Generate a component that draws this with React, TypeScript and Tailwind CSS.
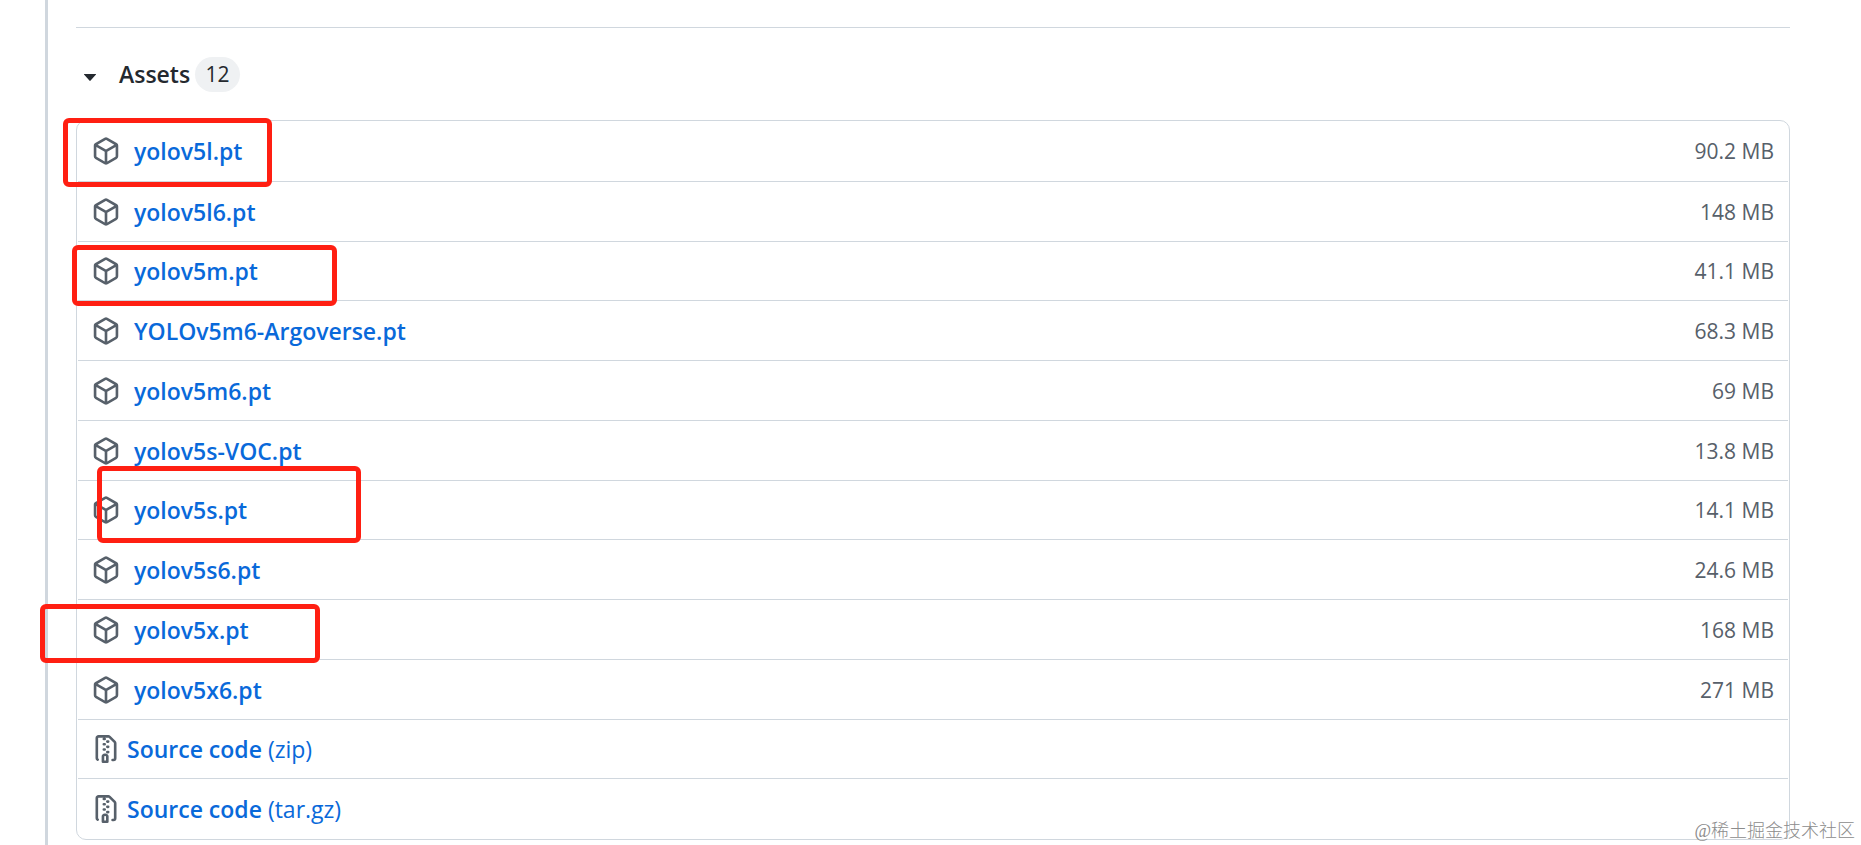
type Asset = {
  name: string;
  size?: string;
  format?: string;
  // box drawn around the files worth downloading
  mark?: string;
};

const assets: Asset[] = [
  { name: "yolov5l.pt", size: "90.2 MB", mark: "-left-[15px] -top-[3px] h-[69px] w-[209px]" },
  { name: "yolov5l6.pt", size: "148 MB" },
  { name: "yolov5m.pt", size: "41.1 MB", mark: "-left-[6px] top-[3px] h-[61px] w-[265px]" },
  { name: "YOLOv5m6-Argoverse.pt", size: "68.3 MB" },
  { name: "yolov5m6.pt", size: "69 MB" },
  { name: "yolov5s-VOC.pt", size: "13.8 MB" },
  { name: "yolov5s.pt", size: "14.1 MB", mark: "left-[19px] -top-[15px] h-[77px] w-[264px]" },
  { name: "yolov5s6.pt", size: "24.6 MB" },
  { name: "yolov5x.pt", size: "168 MB", mark: "-left-[38px] top-[4px] h-[59px] w-[280px]" },
  { name: "yolov5x6.pt", size: "271 MB" },
  { name: "Source code", format: "(zip)" },
  { name: "Source code", format: "(tar.gz)" },
];

function PackageIcon() {
  return (
    <svg viewBox="0 0 16 16" className="size-7 shrink-0 fill-[#57606a]" aria-hidden="true">
      <path d="m8.878.392 5.25 3.045c.54.314.872.89.872 1.514v6.098a1.75 1.75 0 0 1-.872 1.514l-5.25 3.045a1.75 1.75 0 0 1-1.756 0l-5.25-3.045A1.75 1.75 0 0 1 1 11.049V4.951c0-.624.332-1.201.872-1.514L7.122.392a1.75 1.75 0 0 1 1.756 0ZM7.875 1.69l-4.63 2.685L8 7.133l4.755-2.758-4.63-2.685a.248.248 0 0 0-.25 0ZM2.5 5.677v5.372c0 .09.047.171.125.216l4.625 2.683V8.432Zm6.25 8.271 4.625-2.683a.25.25 0 0 0 .125-.216V5.677L8.75 8.432Z" />
    </svg>
  );
}

function FileZipIcon() {
  return (
    <svg viewBox="0 0 16 16" className="size-7 shrink-0 fill-[#57606a]" aria-hidden="true">
      <path d="M3.5 1.75v11.5c0 .09.048.173.126.217a.75.75 0 0 1-.752 1.298A1.748 1.748 0 0 1 2 13.25V1.75C2 .784 2.784 0 3.75 0h5.586c.464 0 .909.185 1.237.513l2.914 2.914c.329.328.513.773.513 1.237v8.586A1.75 1.75 0 0 1 12.25 15h-.5a.75.75 0 0 1 0-1.5h.5a.25.25 0 0 0 .25-.25V4.664a.25.25 0 0 0-.073-.177L9.513 1.573a.25.25 0 0 0-.177-.073H7.25a.75.75 0 0 1 0 1.5h-.5a.75.75 0 0 1 0-1.5h-3a.25.25 0 0 0-.25.25Zm3.75 8.75h.5c.966 0 1.75.784 1.75 1.75v3a.75.75 0 0 1-.75.75h-2.5a.75.75 0 0 1-.75-.75v-3c0-.966.784-1.75 1.75-1.75ZM6 5.25a.75.75 0 0 1 .75-.75h.5a.75.75 0 0 1 0 1.5h-.5A.75.75 0 0 1 6 5.25Zm.75 2.25h.5a.75.75 0 0 1 0 1.5h-.5a.75.75 0 0 1 0-1.5ZM8 6.75A.75.75 0 0 1 8.75 6h.5a.75.75 0 0 1 0 1.5h-.5A.75.75 0 0 1 8 6.75ZM8.75 3h.5a.75.75 0 0 1 0 1.5h-.5a.75.75 0 0 1 0-1.5ZM8 9.75A.75.75 0 0 1 8.75 9h.5a.75.75 0 0 1 0 1.5h-.5A.75.75 0 0 1 8 9.75Zm-1 2.5v2.25h1v-2.25a.25.25 0 0 0-.25-.25h-.5a.25.25 0 0 0-.25.25Z" />
    </svg>
  );
}

function AssetRow({ asset }: { asset: Asset }) {
  return (
    <li className="relative flex h-[60px] items-center justify-between border-b border-[#d0d7de] px-3.5 first:h-[61px] last:border-b-0 nth-[4n+3]:h-[59px]">
      <div className={asset.format ? "flex items-center gap-[7px]" : "flex items-center gap-3.5"}>
        {asset.format ? <FileZipIcon /> : <PackageIcon />}
        <a href="#download" className="text-[#0969da]">
          <span className="font-semibold">{asset.name}</span>
          {asset.format && <span> {asset.format}</span>}
        </a>
      </div>
      {asset.size && <span className="text-[21px] text-[#57606a]">{asset.size}</span>}
      {asset.mark && (
        <span
          className={`pointer-events-none absolute z-10 rounded-md border-5 border-[#ff1f12] ${asset.mark}`}
        />
      )}
    </li>
  );
}

export default function App() {
  return (
    <div className="relative min-h-screen bg-white pl-[45px] font-['Open_Sans','Noto_Sans',sans-serif] text-[23px] leading-8 text-[#24292f]">
      <main className="min-h-screen border-l-3 border-[#d0d7de] pl-7 pr-[71px] pt-[27px]">
        <hr className="border-[#d0d7de]" />

        <details open>
          <summary className="flex h-23 list-none items-center pl-2">
            <svg viewBox="0 0 12 13" className="h-[13px] w-3 fill-[#24292f]" aria-hidden="true">
              <path d="M0 6h12v.5L6.6 12.6a.8.8 0 0 1-1.2 0L0 6.5Z" />
            </svg>
            <span className="ml-[23px] w-17 font-semibold">Assets</span>
            <span className="ml-2 flex h-[35px] w-[45px] items-center justify-center rounded-full bg-[#eff1f3] text-[21px] font-medium">
              12
            </span>
          </summary>

          <ul className="rounded-[10px] border border-[#d0d7de] px-px">
            {assets.map((asset) => (
              <AssetRow key={asset.name + (asset.format ?? "")} asset={asset} />
            ))}
          </ul>
        </details>
      </main>

      <p className="absolute bottom-0 right-1.5 font-['Liberation_Serif','Noto_Sans_CJK_SC',sans-serif] text-lg font-light text-[#8c8c8c]">
        @稀土掘金技术社区
      </p>
    </div>
  );
}
